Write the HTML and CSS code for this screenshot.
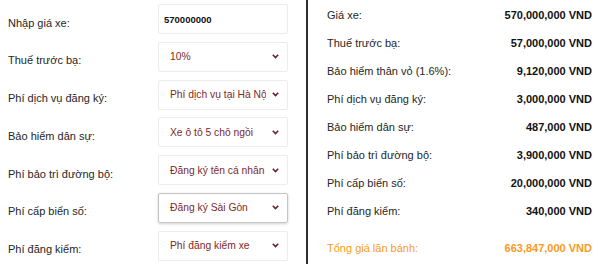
FILE: index.html
```html
<!DOCTYPE html>
<html lang="vi">
<head>
<meta charset="utf-8">
<link rel="stylesheet" href="styles.css">
</head>
<body>
<div class="page">
  <div class="form">
    <div class="frow"><span class="flabel">Nhập giá xe:</span><div class="field input">570000000</div></div>
    <div class="frow"><span class="flabel">Thuế trước bạ:</span><div class="field select"><span class="val">10%</span><svg class="chev" viewBox="0 0 7 5"><path d="M0.8 0.8 L3.5 3.6 L6.2 0.8" /></svg></div></div>
    <div class="frow"><span class="flabel">Phí dịch vụ đăng ký:</span><div class="field select"><span class="val">Phí dịch vụ tại Hà Nội</span><svg class="chev" viewBox="0 0 7 5"><path d="M0.8 0.8 L3.5 3.6 L6.2 0.8" /></svg></div></div>
    <div class="frow"><span class="flabel">Bảo hiểm dân sự:</span><div class="field select"><span class="val">Xe ô tô 5 chỗ ngồi</span><svg class="chev" viewBox="0 0 7 5"><path d="M0.8 0.8 L3.5 3.6 L6.2 0.8" /></svg></div></div>
    <div class="frow"><span class="flabel">Phí bảo trì đường bộ:</span><div class="field select"><span class="val">Đăng ký tên cá nhân</span><svg class="chev" viewBox="0 0 7 5"><path d="M0.8 0.8 L3.5 3.6 L6.2 0.8" /></svg></div></div>
    <div class="frow"><span class="flabel">Phí cấp biển số:</span><div class="field select focus"><span class="val">Đăng ký Sài Gòn</span><svg class="chev" viewBox="0 0 7 5"><path d="M0.8 0.8 L3.5 3.6 L6.2 0.8" /></svg></div></div>
    <div class="frow"><span class="flabel">Phí đăng kiểm:</span><div class="field select"><span class="val">Phí đăng kiểm xe</span><svg class="chev" viewBox="0 0 7 5"><path d="M0.8 0.8 L3.5 3.6 L6.2 0.8" /></svg></div></div>
  </div>
  <div class="divider"></div>
  <div class="result">
    <div class="rrow"><span>Giá xe:</span><b>570,000,000 VND</b></div>
    <div class="rrow"><span>Thuế trước bạ:</span><b>57,000,000 VND</b></div>
    <div class="rrow"><span>Bảo hiểm thân vỏ (1.6%):</span><b>9,120,000 VND</b></div>
    <div class="rrow"><span>Phí dịch vụ đăng ký:</span><b>3,000,000 VND</b></div>
    <div class="rrow"><span>Bảo hiểm dân sự:</span><b>487,000 VND</b></div>
    <div class="rrow"><span>Phí bảo trì đường bộ:</span><b>3,900,000 VND</b></div>
    <div class="rrow"><span>Phí cấp biển số:</span><b>20,000,000 VND</b></div>
    <div class="rrow"><span>Phí đăng kiểm:</span><b>340,000 VND</b></div>
    <div class="rrow total"><span>Tổng giá lăn bánh:</span><b>663,847,000 VND</b></div>
  </div>
</div>
</body>
</html>
```
FILE: styles.css
```css
html, body { margin: 0; padding: 0; background: #fff; }
body { font-family: "Liberation Sans", Arial, sans-serif; color: #222; }
.page { display: flex; width: 600px; height: 264px; overflow: hidden; }
.form { width: 306px; padding: 4px 0 0 8px; box-sizing: border-box; display: flex; flex-direction: column; gap: 7.8px; }
.frow { display: flex; align-items: center; height: 30px; }
.flabel { width: 150px; font-size: 11px; color: #262626; padding-top: 7px; }
.field { width: 130px; height: 30px; box-sizing: border-box; border: 1px solid #ececec; border-radius: 2px; display: flex; align-items: center; overflow: hidden; }
.input { padding-left: 5px; font-size: 9.5px; font-weight: bold; color: #111; }
.select { padding-left: 11px; padding-right: 8px; font-size: 10.3px; color: #7d2a2a; }
.val { flex: 1; white-space: nowrap; overflow: hidden; }
.chev { width: 7px; height: 5px; margin-left: 6px; flex: none; }
.chev path { fill: none; stroke: #6b1a22; stroke-width: 1.5; }
.focus { border-color: #c4c4c4; box-shadow: 0 1px 3px rgba(0,0,0,0.18); }
.divider { width: 2px; background: #2e2e2e; flex: none; }
.result { flex: 1; padding: 1px 8px 0 19px; display: flex; flex-direction: column; }
.rrow { display: flex; justify-content: space-between; align-items: center; height: 28px; font-size: 11px; }
.rrow span { color: #262626; }
.rrow b { font-size: 11px; color: #111; }
.total { margin-top: 9px; }
.total span, .total b { color: #f99a1c; }
```
